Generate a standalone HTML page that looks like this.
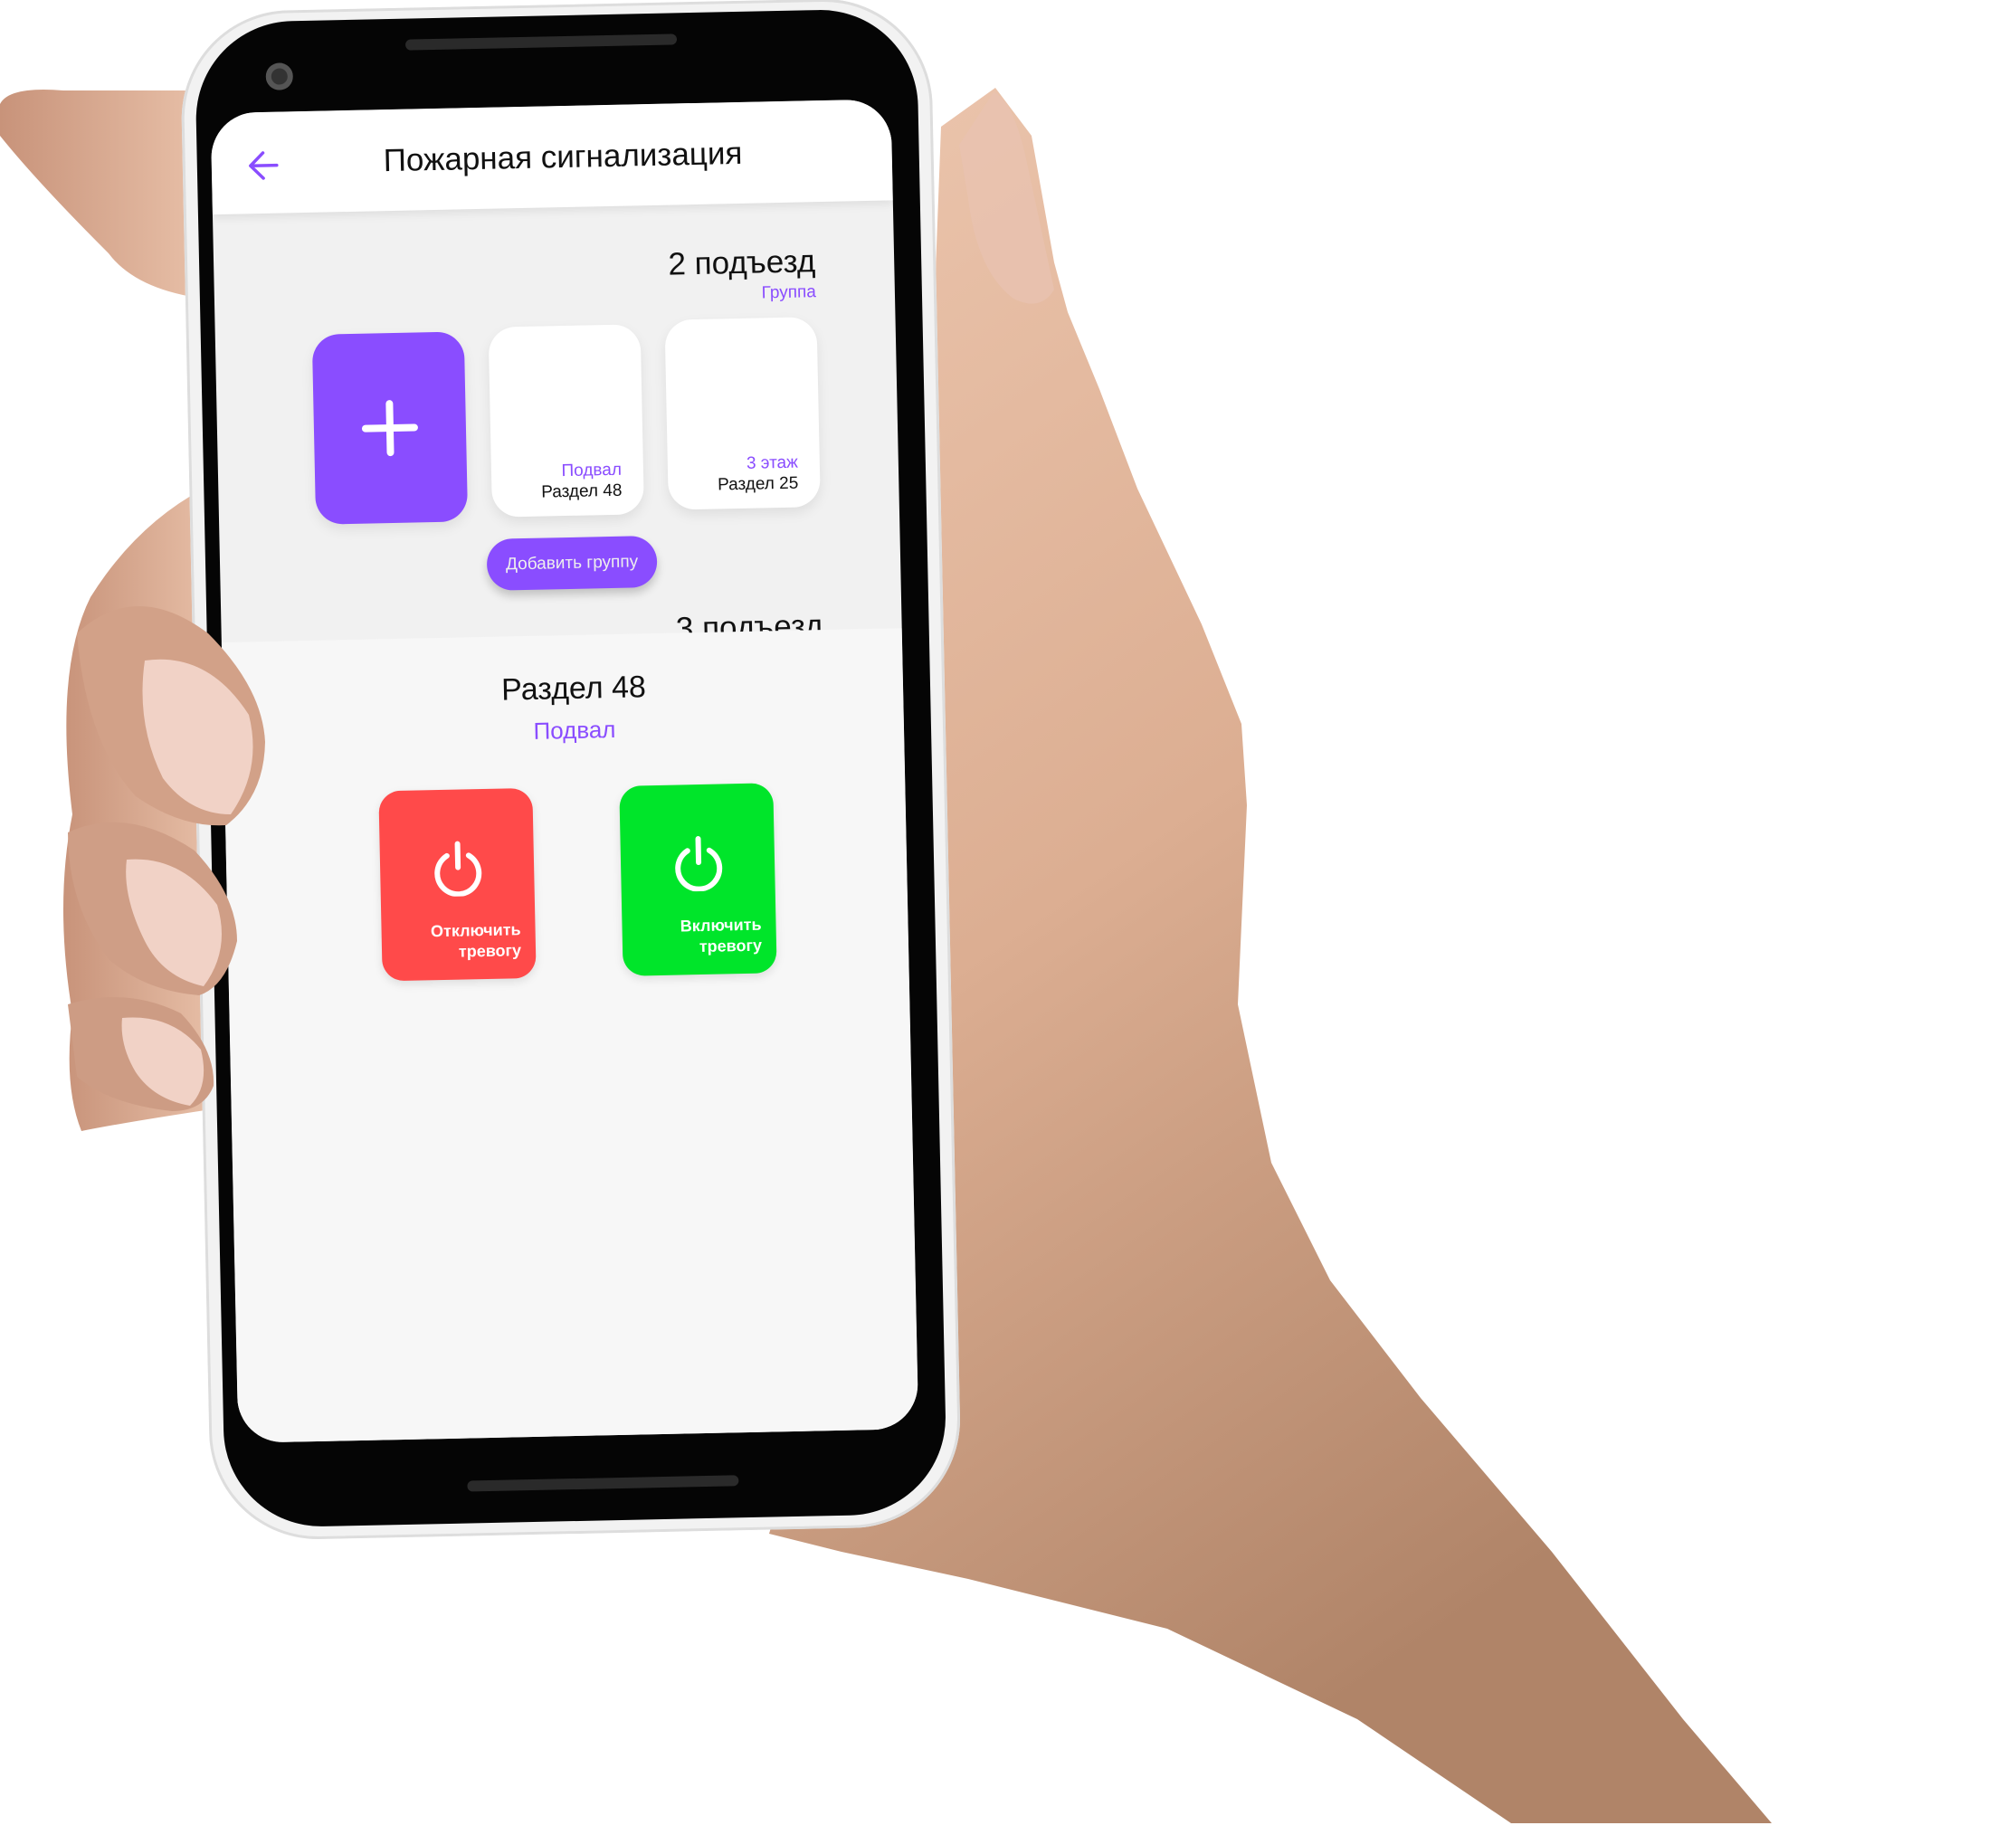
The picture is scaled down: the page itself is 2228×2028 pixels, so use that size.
<!DOCTYPE html>
<html><head><meta charset="utf-8"><style>
body{margin:0;width:2228px;height:2015px;background:#fff;overflow:hidden;position:relative;font-family:"Liberation Sans",sans-serif}
.a{position:absolute}
#phone{position:absolute;left:0;top:0;width:2228px;height:2015px;transform:rotate(-1.2deg);transform-origin:630px 856px}
.card{position:absolute;background:#fff;border-radius:30px;box-shadow:0 6px 14px rgba(0,0,0,.08)}
.t{position:absolute;white-space:nowrap}
</style></head><body>
<svg class="a" style="left:0;top:0" width="2228" height="2015" viewBox="0 0 2228 2015">
<defs>
<linearGradient id="sk" x1="0" y1="0" x2="0.4" y2="1">
<stop offset="0" stop-color="#ecc6ae"/><stop offset="0.5" stop-color="#dcae92"/><stop offset="1" stop-color="#b08468"/></linearGradient>
<linearGradient id="sk2" x1="0" y1="0" x2="1" y2="0">
<stop offset="0" stop-color="#c8937a"/><stop offset="1" stop-color="#e8c0a8"/></linearGradient>
</defs>
<path fill="url(#sk)" d="M1040 140 L1100 97 L1140 150 L1165 290 L1180 345 L1215 430 L1257 540 L1328 690 L1372 800 L1378 890 L1368 1110 L1405 1285 L1470 1415 L1570 1545 L1715 1715 L1860 1900 L1958 2015 L1670 2015 L1500 1900 L1290 1800 L1070 1745 L930 1715 L850 1695 L1000 1200 Z"/>
<path fill="#e9c2b0" d="M1060 160 L1098 102 Q1120 110 1135 180 L1165 320 Q1150 345 1120 330 Q1080 300 1070 220 Z" opacity=".8"/>
<path fill="url(#sk2)" d="M0 115 Q10 95 70 100 L225 100 L225 330 Q150 320 120 280 Q40 200 0 150 Z"/>
<path fill="url(#sk2)" d="M225 540 Q150 580 100 660 Q60 740 80 900 Q60 1000 80 1120 Q70 1200 90 1250 Q140 1240 240 1225 L240 540 Z"/>
</svg>
<div id="phone">
<div class="a" style="left:216px;top:5px;width:830px;height:1690px;border-radius:120px;background:#f2f2f2;box-shadow:inset 0 0 0 3px #ddd"></div>
<div class="a" style="left:232px;top:17px;width:798px;height:1664px;border-radius:108px;background:#050505"></div>
<div class="a" style="left:465px;top:40px;width:300px;height:12px;border-radius:6px;background:#2a2a2a"></div>
<div class="a" style="left:310px;top:63px;width:30px;height:30px;border-radius:50%;background:#333;box-shadow:inset 0 0 0 6px #555"></div>
<div class="a" style="left:500px;top:1634px;width:300px;height:12px;border-radius:6px;background:#2a2a2a"></div>
<div class="a" style="left:248px;top:117px;width:752px;height:1470px;border-radius:50px;background:#f1f1f1;overflow:hidden">
 <div class="a" style="left:0;top:0;width:752px;height:112px;background:#fff;box-shadow:0 4px 10px rgba(0,0,0,.08)"></div>
 <svg class="a" style="left:40px;top:42px" width="36" height="34" viewBox="0 0 36 34"><path d="M32 17H4M17 3 3 17l14 14" stroke="#8a4dff" stroke-width="3.5" fill="none" stroke-linecap="round" stroke-linejoin="round"/></svg>
 <div class="t" style="left:190px;top:37px;font-size:35px;color:#111">Пожарная сигнализация</div>
 <div class="t" style="right:87px;top:158px;font-size:35px;color:#111">2 подъезд</div>
 <div class="t" style="right:87px;top:201px;font-size:19px;color:#8a4dff">Группа</div>
 <div class="card" style="left:107px;top:247px;width:168px;height:210px;background:#8a4dff">
  <div class="a" style="left:53px;top:101px;width:62px;height:8px;background:#fff;border-radius:4px"></div>
  <div class="a" style="left:80px;top:74px;width:8px;height:62px;background:#fff;border-radius:4px"></div>
 </div>
 <div class="card" style="left:302px;top:243px;width:168px;height:210px">
  <div class="t" style="right:24px;top:150px;font-size:19px;color:#8a4dff">Подвал</div>
  <div class="t" style="right:24px;top:173px;font-size:19px;color:#111">Раздел 48</div>
 </div>
 <div class="card" style="left:497px;top:239px;width:168px;height:210px">
  <div class="t" style="right:24px;top:150px;font-size:19px;color:#8a4dff">3 этаж</div>
  <div class="t" style="right:24px;top:173px;font-size:19px;color:#111">Раздел 25</div>
 </div>
 <div class="a" style="left:295px;top:477px;width:188px;height:57px;border-radius:29px;background:#8a4dff;box-shadow:0 6px 10px rgba(0,0,0,.2);color:#eee;font-size:19px;text-align:center;line-height:57px">Добавить группу</div>
 <div class="t" style="right:87px;top:561px;font-size:35px;color:#111">3 подъезд</div>
 <div class="a" style="left:0;top:585px;width:752px;height:900px;background:#f7f7f7">
  <div class="t" style="left:12px;width:752px;text-align:center;top:40px;font-size:34px;color:#111">Раздел 48</div>
  <div class="t" style="left:12px;width:752px;text-align:center;top:90px;font-size:26px;color:#8a4dff">Подвал</div>
  <div class="a" style="left:170px;top:168px;width:170px;height:210px;border-radius:24px;background:#ff4a4a;box-shadow:0 4px 10px rgba(0,0,0,.1)">
   <svg class="a" style="left:56px;top:56px" width="60" height="62" viewBox="0 0 60 62"><path d="M18 17A23 23 0 1 0 42 17" stroke="#fff" stroke-width="6" fill="none" stroke-linecap="round"/><path d="M30 4V30" stroke="#fff" stroke-width="6" stroke-linecap="round"/></svg>
   <div class="t" style="right:16px;top:145px;font-size:18px;font-weight:bold;color:#fff;text-align:right;line-height:23px">Отключить<br>тревогу</div>
  </div>
  <div class="a" style="left:436px;top:168px;width:170px;height:210px;border-radius:24px;background:#00e52a;box-shadow:0 4px 10px rgba(0,0,0,.1)">
   <svg class="a" style="left:56px;top:56px" width="60" height="62" viewBox="0 0 60 62"><path d="M18 17A23 23 0 1 0 42 17" stroke="#fff" stroke-width="6" fill="none" stroke-linecap="round"/><path d="M30 4V30" stroke="#fff" stroke-width="6" stroke-linecap="round"/></svg>
   <div class="t" style="right:16px;top:145px;font-size:18px;font-weight:bold;color:#fff;text-align:right;line-height:23px">Включить<br>тревогу</div>
  </div>
 </div>
</div>
</div>
<svg class="a" style="left:0;top:0" width="400" height="1300" viewBox="0 0 400 1300">
<path fill="#d2a188" d="M85 700 Q150 640 230 700 Q290 760 293 820 Q292 880 250 912 Q200 915 150 880 Q95 820 85 700 Z"/>
<path fill="#f1d2c6" d="M160 730 Q230 720 275 790 Q290 850 255 900 Q210 900 180 860 Q150 800 160 730 Z"/>
<path fill="#cf9e86" d="M75 920 Q140 890 215 940 Q262 990 262 1040 Q250 1090 220 1100 Q160 1095 120 1060 Q75 1000 75 920 Z"/>
<path fill="#f1d2c6" d="M140 950 Q200 945 240 1000 Q255 1050 225 1090 Q180 1080 160 1040 Q135 990 140 950 Z"/>
<path fill="#cd9c84" d="M75 1110 Q140 1090 200 1120 Q238 1160 236 1200 Q225 1228 190 1228 Q120 1220 85 1190 Z"/>
<path fill="#f1d2c6" d="M135 1125 Q190 1120 222 1160 Q232 1200 210 1222 Q170 1215 150 1185 Q132 1155 135 1125 Z"/>
</svg>
</body></html>
